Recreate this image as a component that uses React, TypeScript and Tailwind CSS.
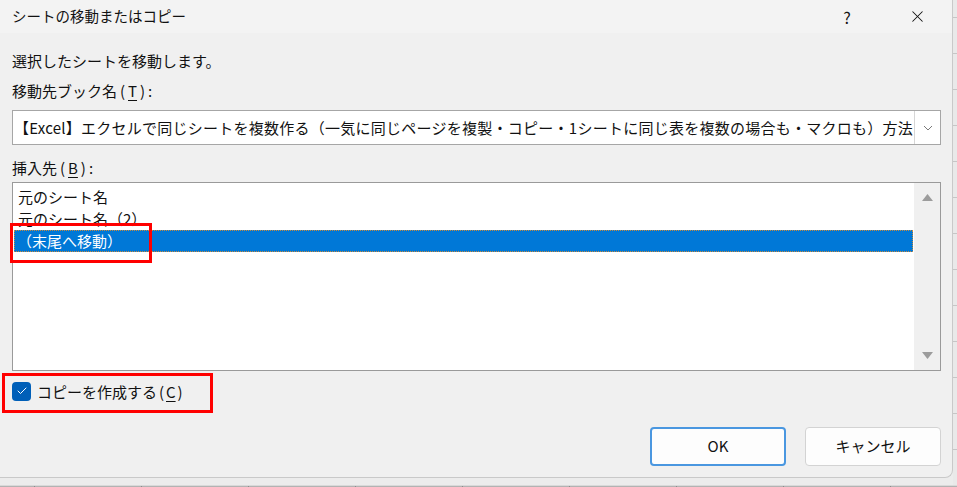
import { Check, X } from "lucide-react";

const font = "font-['Noto_Sans_CJK_JP','Noto_Sans',sans-serif]";

const listItems = ["元のシート名", "元のシート名（2）", "（末尾へ移動）"];

const U = ({ children }: { children: string }) => (
  <span className="underline underline-offset-[3px] decoration-1">{children}</span>
);

const P = ({ children, w = "w-[9px]" }: { children: string; w?: string }) => (
  <span className={`inline-block text-center ${w}`}>{children}</span>
);

export default function App() {
  return (
    <div className={`relative w-[957px] h-[487px] overflow-hidden bg-[#ececec] text-[#111] ${font}`}>
      <div className="flex">
        {/* dialog */}
        <div className="w-[953px] h-[478px] shrink-0 bg-[#f0f0f0] border-r border-b border-[#c9c9c9] rounded-br-[8px] flex flex-col">
          <div className="h-[33px] bg-[#f3f3f3] flex items-center pl-[12px] pr-[12px]">
            <span className="text-[14.5px] leading-none">シートの移動またはコピー</span>
            <div className="ml-auto flex items-center">
              <div className="w-[46px] flex justify-center text-[16px] leading-none">?</div>
              <div className="w-[24px]" />
              <div className="w-[46px] flex justify-center">
                <X size={19} strokeWidth={1.3} />
              </div>
            </div>
          </div>

          <div className="pl-[12px] pr-[11px] pt-[17px] flex flex-col text-[15px]">
            <p className="leading-[22px]">選択したシートを移動します。</p>
            <p className="leading-[22px] mt-[8px]">
              移動先ブック名<P w="w-[11px]">(</P>
              <U>T</U>
              <P w="w-[11px]">)</P>:
            </p>

            <div className="mt-[8px] h-[35px] flex bg-white border border-[#a6a6a6]">
              <div className="flex-1 flex items-center pl-[1px] whitespace-nowrap overflow-hidden leading-none tracking-[0.25px]">
                【Excel】エクセルで同じシートを複数作る（一気に同じページを複製・コピー・1シートに同じ表を複数の場合も・マクロも）方法
              </div>
              <div className="w-[26px] border-l border-[#d6d6d6] flex items-center justify-center">
                <svg width="10" height="6" viewBox="0 0 10 6" fill="none">
                  <path d="M1 1l4 4 4-4" stroke="#7a7a7a" strokeWidth="1" />
                </svg>
              </div>
            </div>

            <p className="leading-[22px] mt-[12px]">
              挿入先<P w="w-[11px]">(</P>
              <U>B</U>
              <P w="w-[11px]">)</P>:
            </p>

            <div className="mt-[3px] h-[189px] flex bg-white border border-[#9a9a9a]">
              <div className="flex-1 pt-[3px] px-[1px]">
                {listItems.map((item, i) => (
                  <div
                    key={item}
                    className={
                      i === 2
                        ? "h-[22px] flex items-center pl-[3px] bg-[#0078d7] text-white outline outline-1 outline-dotted outline-[#c98a3c] -outline-offset-1"
                        : "h-[22px] flex items-center pl-[4px]"
                    }
                  >
                    {item}
                  </div>
                ))}
              </div>
              <div className="w-[26px] bg-[#f0f0f0] flex flex-col items-center justify-between py-[11px]">
                <svg width="11" height="7" viewBox="0 0 11 7">
                  <path d="M5.5 0L11 7H0z" fill="#9c9c9c" />
                </svg>
                <svg width="11" height="7" viewBox="0 0 11 7">
                  <path d="M0 0h11L5.5 7z" fill="#9c9c9c" />
                </svg>
              </div>
            </div>

            <label className="mt-[10px] h-[20px] flex items-center gap-[6px]">
              <span className="w-[19px] h-[19px] rounded-[4px] bg-[#005fb8] flex items-center justify-center">
                <Check size={12} strokeWidth={2} color="white" />
              </span>
              <span className="leading-none">
                コピーを作成する<P>(</P>
                <U>C</U>
                <P>)</P>
              </span>
            </label>

            <div className="mt-[26px] flex justify-end gap-[19px]">
              <button
                type="button"
                className="w-[136px] h-[39px] rounded-[4px] bg-[#fdfdfd] border-2 border-[#4a97e0] text-[15px]"
              >
                OK
              </button>
              <button
                type="button"
                className="w-[136px] h-[39px] rounded-[4px] bg-[#fdfdfd] border border-[#d3d3d3] text-[15px]"
              >
                キャンセル
              </button>
            </div>
          </div>
        </div>

        {/* sheet grid peeking out on the right */}
        <div className="flex-1 flex flex-col bg-[#e9e9e9]">
          <div className="h-[17px] shrink-0" />
          {Array.from({ length: 13 }).map((_, i) => (
            <div key={i} className="h-[36px] shrink-0 border-t border-[#c6c6c6]" />
          ))}
        </div>
      </div>

      {/* column headers under the dialog */}
      <div className="h-[9px] flex bg-[#b3b3b3] border-t border-[#d9d9d9]">
        <div className="w-[34px] shrink-0" />
        {Array.from({ length: 9 }).map((_, i) => (
          <div key={i} className="w-[107px] shrink-0 border-l border-[#8c8c8c]" />
        ))}
      </div>

      {/* red annotation boxes */}
      <div className="absolute left-[10px] top-[223px] w-[142px] h-[40px] border-[3px] border-[#ff0000]" />
      <div className="absolute left-[2px] top-[373px] w-[211px] h-[40px] border-[3px] border-[#ff0000]" />
    </div>
  );
}
